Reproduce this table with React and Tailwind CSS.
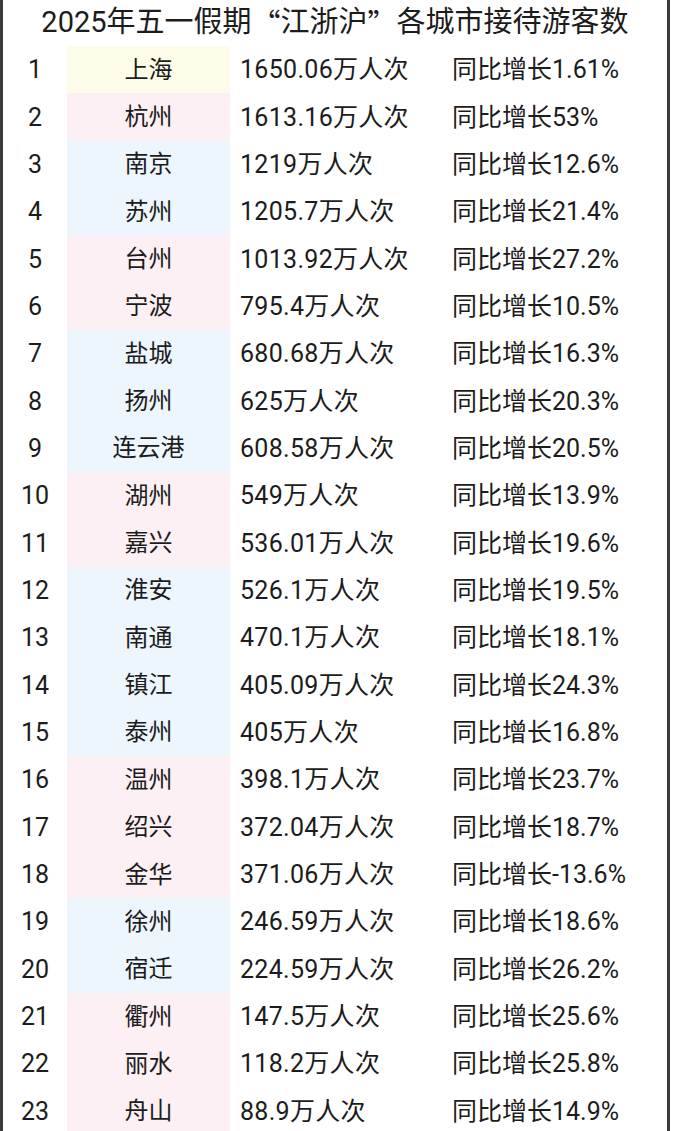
const rows = [
  ['1', '上海', '1650.06万人次', '同比增长1.61%', 'sh'],
  ['2', '杭州', '1613.16万人次', '同比增长53%', 'zj'],
  ['3', '南京', '1219万人次', '同比增长12.6%', 'js'],
  ['4', '苏州', '1205.7万人次', '同比增长21.4%', 'js'],
  ['5', '台州', '1013.92万人次', '同比增长27.2%', 'zj'],
  ['6', '宁波', '795.4万人次', '同比增长10.5%', 'zj'],
  ['7', '盐城', '680.68万人次', '同比增长16.3%', 'js'],
  ['8', '扬州', '625万人次', '同比增长20.3%', 'js'],
  ['9', '连云港', '608.58万人次', '同比增长20.5%', 'js'],
  ['10', '湖州', '549万人次', '同比增长13.9%', 'zj'],
  ['11', '嘉兴', '536.01万人次', '同比增长19.6%', 'zj'],
  ['12', '淮安', '526.1万人次', '同比增长19.5%', 'js'],
  ['13', '南通', '470.1万人次', '同比增长18.1%', 'js'],
  ['14', '镇江', '405.09万人次', '同比增长24.3%', 'js'],
  ['15', '泰州', '405万人次', '同比增长16.8%', 'js'],
  ['16', '温州', '398.1万人次', '同比增长23.7%', 'zj'],
  ['17', '绍兴', '372.04万人次', '同比增长18.7%', 'zj'],
  ['18', '金华', '371.06万人次', '同比增长-13.6%', 'zj'],
  ['19', '徐州', '246.59万人次', '同比增长18.6%', 'js'],
  ['20', '宿迁', '224.59万人次', '同比增长26.2%', 'js'],
  ['21', '衢州', '147.5万人次', '同比增长25.6%', 'zj'],
  ['22', '丽水', '118.2万人次', '同比增长25.8%', 'zj'],
  ['23', '舟山', '88.9万人次', '同比增长14.9%', 'zj'],
];

const bg = {
  sh: 'bg-[#fdfce9]',
  zj: 'bg-[#fdf0f5]',
  js: 'bg-[#edf5fd]',
};

const cjk = { fontFamily: '"Noto Sans CJK SC", sans-serif' };

export default function App() {
  return (
    <div
      className="w-[673px] h-[1131px] overflow-hidden bg-white text-[#1c1c1c]"
      style={{ fontFamily: 'Roboto, "Noto Sans CJK SC", sans-serif' }}
    >
      <div className="w-[670px] h-full border-x-[3px] border-[#3a3a3a]">
        <div className="h-[46px] flex items-center justify-center text-[29px] leading-none pb-[2px]">
          2025年五一假期<span style={cjk}>“</span>江浙沪<span style={cjk}>”</span>各城市接待游客数
        </div>
        {rows.map(([n, city, value, growth, region]) => (
          <div key={n} className="flex h-[47.35px] items-center text-[25px] leading-none">
            <div className="w-[64px] text-center">{n}</div>
            <div className={`w-[163px] h-full flex items-center justify-center text-[24px] ${bg[region]}`}>
              {city}
            </div>
            <div className="w-[222px] pl-[10px] tracking-[0.3px]">{value}</div>
            <div className="flex-1">{growth}</div>
          </div>
        ))}
      </div>
    </div>
  );
}
